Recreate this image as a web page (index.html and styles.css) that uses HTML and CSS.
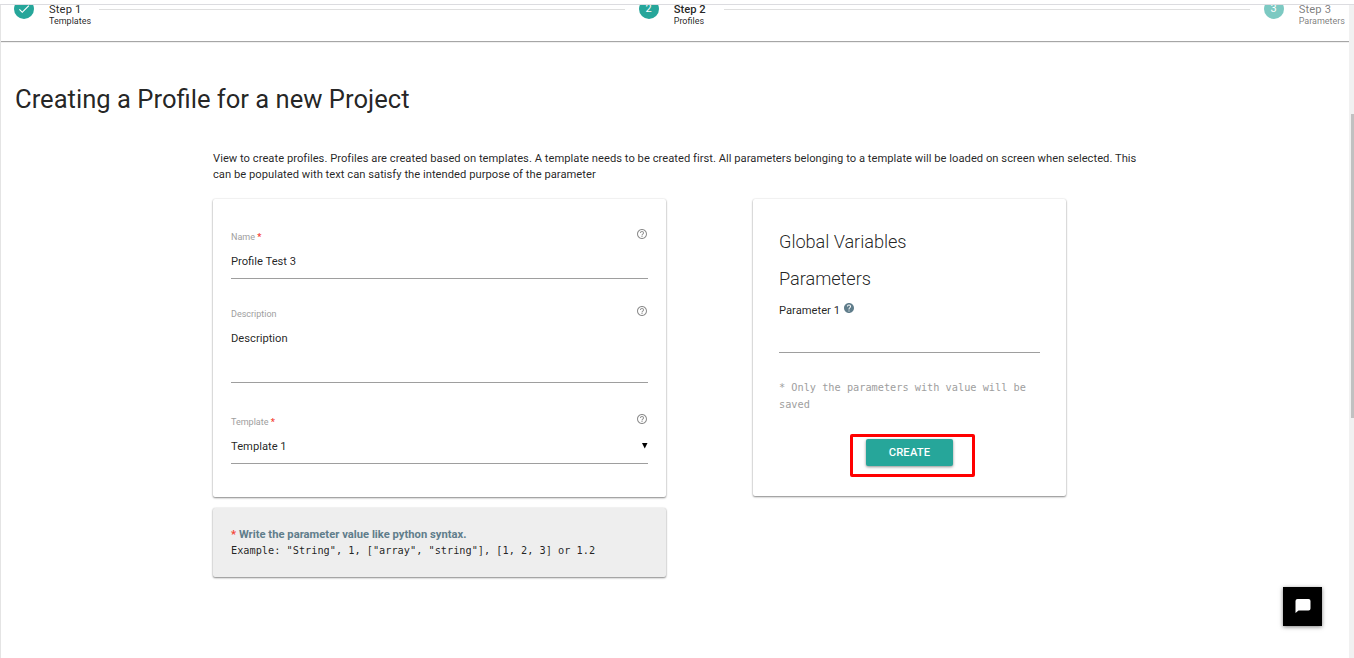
FILE: index.html
```html
<!DOCTYPE html>
<html lang="en">
<head>
<meta charset="utf-8">
<title>Creating a Profile</title>
<link rel="stylesheet" href="styles.css">
</head>
<body>
<svg class="defs" width="0" height="0">
  <symbol id="help" viewBox="0 0 24 24"><path d="M11 18h2v-2h-2v2zm1-16C6.48 2 2 6.48 2 12s4.480 10 10 10 10-4.480 10-10S17.520 2 12 2zm0 18c-4.410 0-8-3.590-8-8s3.590-8 8-8 8 3.590 8 8-3.590 8-8 8zm0-14c-2.210 0-4 1.790-4 4h2c0-1.100.9-2 2-2s2 .9 2 2c0 2-3 1.750-3 5h2c0-2.250 3-2.500 3-5 0-2.210-1.790-4-4-4z"/></symbol>
  <symbol id="help-solid" viewBox="0 0 24 24"><path d="M12 2C6.480 2 2 6.480 2 12s4.480 10 10 10 10-4.480 10-10S17.520 2 12 2zm1 17h-2v-2h2v2zm2.070-7.750l-.9.920C13.450 12.900 13 13.500 13 15h-2v-.5c0-1.100.45-2.100 1.170-2.830l1.240-1.260c.37-.36.590-.86.590-1.410 0-1.100-.9-2-2-2s-2 .9-2 2H8c0-2.210 1.790-4 4-4s4 1.790 4 4c0 .88-.36 1.680-.93 2.250z"/></symbol>
</svg>
<div class="screen">
  <div class="view">
    <header class="stepper">
      <div class="step">
        <span class="dot"><svg width="14" height="14" viewBox="0 0 24 24"><path d="M9 16.170L4.830 12l-1.420 1.410L9 19 21 7l-1.410-1.410z"/></svg></span>
        <div class="step-text"><div class="step-title">Step 1</div><div class="step-sub">Templates</div></div>
      </div>
      <div class="rail"></div>
      <div class="step">
        <span class="dot">2</span>
        <div class="step-text"><div class="step-title current">Step 2</div><div class="step-sub">Profiles</div></div>
      </div>
      <div class="rail"></div>
      <div class="step pending">
        <span class="dot">3</span>
        <div class="step-text"><div class="step-title">Step 3</div><div class="step-sub">Parameters</div></div>
      </div>
    </header>
    <main class="main">
      <h1 class="title">Creating a Profile for a new Project</h1>
      <p class="intro">View to create profiles. Profiles are created based on templates. A template needs to be created first. All parameters belonging to a template will be loaded on screen when selected. This<br>can be populated with text can satisfy the intended purpose of the parameter</p>
      <div class="columns">
        <div class="left">
          <section class="card form">
            <div class="field">
              <div class="label"><span>Name <b class="req">*</b></span><svg class="help"><use href="#help"/></svg></div>
              <div class="value">Profile Test 3</div>
            </div>
            <div class="field tall">
              <div class="label"><span>Description</span><svg class="help"><use href="#help"/></svg></div>
              <div class="value">Description</div>
            </div>
            <div class="field">
              <div class="label"><span>Template <b class="req">*</b></span><svg class="help"><use href="#help"/></svg></div>
              <div class="value select"><span class="option">Template 1</span><svg class="caret" width="6" height="6" viewBox="0 0 6 6"><path d="M0 0h5.500L2.750 5.500z"/></svg></div>
            </div>
          </section>
          <section class="card note">
            <div class="note-title"><span class="req">*</span> Write the parameter value like python syntax.</div>
            <div class="mono">Example: "String", 1, ["array", "string"], [1, 2, 3] or 1.2</div>
          </section>
        </div>
        <section class="card params">
          <h2 class="subtitle">Global Variables</h2>
          <h2 class="subtitle">Parameters</h2>
          <div class="param">Parameter 1 <svg class="help-solid"><use href="#help-solid"/></svg></div>
          <div class="param-input"></div>
          <p class="mono hint">* Only the parameters with value will be<br>saved</p>
          <div class="highlight"><button class="create">CREATE</button></div>
        </section>
      </div>
    </main>
  </div>
  <div class="scrollbar"><div class="thumb"></div></div>
</div>
<div class="chat"><svg width="16" height="15" viewBox="0 0 16 15"><path d="M2.500 0h11A2 2 0 0 1 15.500 2v7.500a2 2 0 0 1-2 2H3.500L.5 14V2a2 2 0 0 1 2-2z"/></svg></div>
</body>
</html>
```
FILE: styles.css
```css
* { box-sizing: border-box; }
body {
  margin: 0;
  width: 1354px;
  height: 658px;
  overflow: hidden;
  padding-top: 4px;
  background: #fff;
  color: rgba(0, 0, 0, .87);
  font: 11.2px/16px Roboto, sans-serif;
}
.defs { position: absolute; }
.screen { display: flex; height: 654px; border-top: 1px solid #dcdce0; overflow: hidden; }
.view { width: 1349px; border-left: 1px solid #e4e4e4; }
.stepper {
  display: flex;
  height: 36px;
  padding: 0 4px 0 13px;
  box-shadow: 0 1px 1px rgba(0, 0, 0, .35);
  clip-path: inset(0 0 -4px 0);
}
.step { display: flex; gap: 15px; margin-top: -6px; }
.step.pending { opacity: .6; }
.dot {
  display: flex;
  align-items: center;
  justify-content: center;
  width: 20px;
  height: 20px;
  border-radius: 50%;
  background: #26a69a;
  color: #fff;
  font-size: 11px;
}
.dot svg { fill: #fff; }
.step-title { padding-top: 3px; font-size: 11.2px; line-height: 15px; letter-spacing: .15px; }
.step-title.current { font-weight: 500; letter-spacing: 0; }
.step-sub { font-size: 9px; line-height: 8px; }
.rail { flex: 1; height: 1px; margin: 4px 14px 0 8px; background: #dfdfdf; }
.step + .rail ~ .step + .rail { flex: 0 0 526px; margin-left: 18px; }
.main { padding: 43px 14px 0; }
.title { margin: 0; font-size: 25.6px; line-height: 30px; font-weight: 400; }
.intro { margin: 37px 0 0 198px; white-space: nowrap; letter-spacing: .019px; }
.columns { display: flex; align-items: flex-start; gap: 87px; margin: 16px 0 0 198px; }
.left { width: 453px; }
.card { border-radius: 2px; background: #fff; box-shadow: 0 1px 2px rgba(0, 0, 0, .45), 0 0 2px rgba(0, 0, 0, .12); }
.form { height: 298px; padding: 26px 18px 0; }
.field { height: 54px; margin-bottom: 23px; border-bottom: 1px solid #9e9e9e; }
.field.tall { height: 81px; margin-bottom: 27px; }
.label { display: flex; justify-content: space-between; height: 20px; padding-top: 5px; color: #9e9e9e; font-size: 9px; line-height: 14px; }
.req { color: #f44336; }
.help { width: 12px; height: 12px; margin-top: -2.500px; fill: #8e8e8e; }
.value { padding-top: 9px; line-height: 16px; }
.select { display: flex; justify-content: space-between; }
.caret { margin: 4px 0 0; fill: #000; }
.note { height: 69px; margin-top: 11px; padding: 19px 18px 0; background: #eee; }
.note-title { color: #607d8b; font-weight: 700; line-height: 16px; letter-spacing: .02px; }
.mono { font-family: "DejaVu Sans Mono", monospace; font-size: 10.26px; line-height: 17px; }
.note .mono { margin-top: -1px; }
.params { width: 313px; height: 297px; padding: 24px 26px 0; }
.subtitle { margin: 0; font-size: 18.2px; line-height: 37px; font-weight: 300; letter-spacing: -.06px; }
.param { display: flex; gap: 3px; padding-top: 6px; line-height: 16px; }
.help-solid { width: 12px; height: 12px; margin-top: -1px; fill: #607d8b; }
.param-input { height: 34px; border-bottom: 1px solid #9e9e9e; }
.hint { margin: 26px 0 0; color: #9e9e9e; }
.highlight { width: 125px; height: 43px; margin: 21px 0 0 71px; padding: 2px 0 0 13px; border: 3px solid #f00; border-radius: 2px; }
.create { width: 87px; height: 27px; padding: 0; border: 0; border-radius: 2px; background: #26a69a; color: #fff; font: 500 11.2px/27px Roboto, sans-serif; letter-spacing: .2px; box-shadow: 0 1px 3px rgba(0, 0, 0, .45); }
.scrollbar { width: 5px; padding: 109px 0 0 2px; background: #f1f1f1; }
.thumb { height: 304px; background: #c1c1c1; }
.chat { position: absolute; left: 1283px; top: 587px; display: flex; align-items: center; justify-content: center; width: 39px; height: 39px; background: #000; box-shadow: 0 1px 4px rgba(0, 0, 0, .5); }
.chat svg { fill: #fff; }
```
